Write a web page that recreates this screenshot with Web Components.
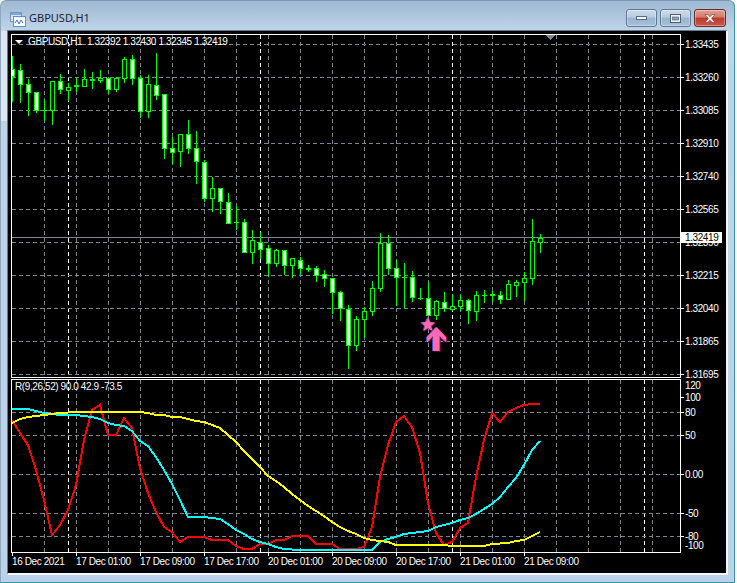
<!DOCTYPE html>
<html>
<head>
<meta charset="utf-8">
<title>GBPUSD,H1</title>
<style>
  html, body { margin: 0; background: #fff; }
</style>
</head>
<body>
<mt-window>
  <span slot="title">GBPUSD,H1</span>
  <mt-chart></mt-chart>
</mt-window>

<script>
const GRID = "#778899";

// vertical grid lines shared by both panes
function gridColumns(top, bottom) {
  let out = "";
  for (let x = 44; x < 680; x += 32) {
    out += `<line x1="${x + 0.5}" x2="${x + 0.5}" y1="${top}" y2="${bottom}" stroke="${GRID}" stroke-dasharray="4 3"/>`;
  }
  for (let x = 68; x < 680; x += 192) {
    out += `<line x1="${x + 0.5}" x2="${x + 0.5}" y1="${top}" y2="${bottom}" stroke="#fff" stroke-dasharray="4 3"/>`;
  }
  return out;
}

function gridRows(levels) {
  return levels.map(y =>
    `<line x1="12" x2="680" y1="${y + 0.5}" y2="${y + 0.5}" stroke="${GRID}" stroke-dasharray="4 3"/>`
  ).join("");
}

// wickTop, wickBottom, bodyTop, bodyBottom, kind (w = white, h = hollow)
const CANDLES = [
  [56,101,69,76,"w"],[64,102,70,84,"w"],[79,115,84,92,"w"],[92,112,92,110,"w"],
  [100,120,110,110,"d"],[81,124,81,110,"h"],[74,93,81,89,"w"],[83,100,87,90,"h"],
  [78,91,85,86,"d"],[69,86,79,86,"h"],[72,88,79,80,"d"],[70,82,78,80,"h"],
  [77,93,78,89,"w"],[77,91,78,89,"h"],[57,82,59,78,"h"],[55,84,59,78,"w"],
  [75,117,78,111,"w"],[75,117,84,111,"h"],[53,99,85,95,"w"],[94,158,94,148,"w"],
  [137,163,148,152,"w"],[134,166,134,151,"h"],[120,153,134,148,"w"],[131,183,148,161,"w"],
  [160,201,162,198,"w"],[177,211,188,198,"h"],[188,213,188,201,"w"],[193,223,202,223,"w"],
  [206,229,222,222,"d"],[219,252,222,252,"w"],[230,263,240,252,"h"],[232,258,242,249,"w"],
  [245,276,248,263,"w"],[249,266,250,263,"h"],[250,274,250,265,"w"],[258,277,258,265,"h"],
  [257,274,260,268,"w"],[265,271,268,269,"d"],[266,281,268,275,"w"],[270,286,274,278,"w"],
  [278,313,278,292,"w"],[291,320,292,308,"w"],[305,368,309,345,"w"],[316,350,319,345,"h"],
  [307,337,311,319,"h"],[281,315,288,311,"h"],[233,291,243,288,"h"],[235,274,243,268,"w"],
  [260,305,268,277,"w"],[263,307,277,277,"d"],[271,301,277,297,"w"],[288,299,298,298,"d"],
  [282,315,298,315,"w"],[300,319,301,315,"h"],[292,311,302,308,"w"],[294,310,306,309,"h"],
  [295,310,300,306,"h"],[299,323,300,310,"w"],[291,320,295,311,"h"],[290,302,295,295,"d"],
  [291,301,294,295,"d"],[291,303,295,299,"w"],[280,299,284,299,"h"],[280,296,282,285,"h"],
  [272,300,278,282,"h"],[219,284,241,278,"h"],[234,252,238,242,"h"]
];

const RED = "12,420 20,433 28,445 36,470 44,500 52,535 60,525 68,510 76,485 84,440 92,410 100,405 108,435 116,435 124,418 132,428 140,468 148,493 156,512 164,527 172,532 180,542 188,537 196,537 204,537 212,540 220,540 228,540 236,546 244,549 252,549 260,544 268,544 276,540 284,540 292,536 300,536 308,536 316,544 324,544 332,544 340,549 348,549 356,549 364,547 372,527 380,477 388,445 396,422 404,416 412,427 420,453 428,503 436,533 444,545 452,542 460,528 468,523 476,477 484,440 492,413 500,422 508,412 516,408 524,405 532,404 540,404";
const CYAN = "12,409 28,409 36,411 44,413 52,414 60,415 76,415 84,416 92,417 100,419 108,423 116,425 124,426 132,431 140,441 148,446 156,457 164,470 172,484 180,500 188,517 204,517 212,518 220,519 228,524 236,530 244,534 252,539 260,542 268,544 276,547 284,549 300,550 372,550 380,542 388,539 396,537 404,534 412,533 420,532 428,531 436,527 444,525 452,523 460,520 468,518 476,514 484,509 492,504 500,497 508,487 516,478 524,465 532,450 540,441";
const YELLOW = "12,423 20,419 28,417 36,416 44,415 52,414 60,413 76,412 140,412 148,413 156,415 164,415 172,417 180,417 188,419 196,421 204,422 212,425 220,428 228,435 236,442 244,451 260,467 268,476 276,481 284,487 292,494 300,500 308,506 316,511 324,516 332,522 340,527 348,531 356,534 364,538 372,540 380,541 388,542 396,545 444,545 452,546 484,546 492,544 508,543 516,541 524,540 532,536 540,532";

const CHART_FONT = `font: 10px "Liberation Sans", sans-serif; letter-spacing: -0.4px; color: #fff;`;

const paneTemplate = document.createElement("template");
paneTemplate.innerHTML = `
  <style>
    :host { display: block; position: relative; box-sizing: border-box; border: 1px solid #fff; ${CHART_FONT} }
    svg { display: block; }
    .legend { position: absolute; top: 1px; left: 3px; display: flex; align-items: center; gap: 5px; line-height: 12px; white-space: pre; }
  </style>
  <svg shape-rendering="crispEdges"></svg>
  <div class="legend"><slot></slot></div>
`;

class MtPricePane extends HTMLElement {
  constructor() {
    super();
    this.root = this.attachShadow({ mode: "open" });
    this.root.appendChild(paneTemplate.content.cloneNode(true));
  }

  connectedCallback() {
    const svg = this.root.querySelector("svg");
    svg.setAttribute("width", 668);
    svg.setAttribute("height", 342);
    svg.setAttribute("viewBox", "12 35 668 342");

    const rows = [];
    for (let y = 44; y < 377; y += 33) rows.push(y);

    let marks = "";
    CANDLES.forEach((c, i) => {
      const x = 12 + i * 8;
      const [wickTop, wickBottom, bodyTop, bodyBottom, kind] = c;
      marks += `<rect x="${x}" y="${wickTop}" width="1" height="${wickBottom - wickTop + 1}" fill="#0f0"/>`;
      marks += `<rect x="${x - 2}" y="${bodyTop}" width="5" height="${bodyBottom - bodyTop + 1}" fill="#0f0"/>`;
      if (kind !== "d") {
        marks += `<rect x="${x - 1}" y="${bodyTop + 1}" width="3" height="${bodyBottom - bodyTop - 1}" fill="${kind === "w" ? "#fff" : "#000"}"/>`;
      }
    });

    const arrow = "436.5,327 446,337 446,342 439.5,336 439.5,351 433,351 433,336 427,342.5 427,337";
    const star = "428,317 430,322 435,322.5 431,326 432.5,331 428,328 423.5,331 425,326 421,322.5 426,322";

    svg.innerHTML = gridColumns(35, 377) + gridRows(rows)
      + `<line x1="12" x2="680" y1="237.5" y2="237.5" stroke="${GRID}"/>`
      + marks
      + `<polygon points="546,35 555,35 550.5,40" fill="${GRID}"/>`
      + `<g shape-rendering="auto">
           <polygon points="${star}" fill="#4a4ac8" transform="translate(-1 0)"/>
           <polygon points="${star}" fill="#b01048" transform="translate(0.8 0.6)"/>
           <polygon points="${star}" fill="#ff69b4"/>
           <polygon points="${arrow}" fill="#4a4ac8" transform="translate(-1 0)"/>
           <polygon points="${arrow}" fill="#b01048" transform="translate(1 0.6)"/>
           <polygon points="${arrow}" fill="#ff69b4"/>
         </g>`;
  }
}

class MtIndicatorPane extends HTMLElement {
  constructor() {
    super();
    this.root = this.attachShadow({ mode: "open" });
    this.root.appendChild(paneTemplate.content.cloneNode(true));
  }

  connectedCallback() {
    const svg = this.root.querySelector("svg");
    svg.setAttribute("width", 668);
    svg.setAttribute("height", 172);
    svg.setAttribute("viewBox", "12 380 668 172");

    const line = (points, color) =>
      `<polyline points="${points}" fill="none" stroke="${color}" stroke-width="2"/>`;

    svg.innerHTML = gridColumns(380, 552) + gridRows([412, 435, 474, 513, 536])
      + line(RED, "#f00") + line(CYAN, "#0ff") + line(YELLOW, "#ff0");
  }
}

const axisTemplate = document.createElement("template");
axisTemplate.innerHTML = `
  <style>
    :host { display: flex; flex-direction: column; position: relative; width: 45px; ${CHART_FONT} }
    .row { display: flex; align-items: center; flex: none; white-space: nowrap; }
    .row i { flex: none; width: 3px; height: 1px; margin-right: 1px; background: #fff; }
    .row i.none { background: none; }
    .current { position: absolute; left: 0; top: 198px; width: 41px; height: 11px; box-sizing: border-box; padding-left: 4px; background: #fff; color: #000; line-height: 11px; }
  </style>
`;

// rows: [label, height, hasTick]
class MtAxis extends HTMLElement {
  constructor() {
    super();
    this.root = this.attachShadow({ mode: "open" });
    this.root.appendChild(axisTemplate.content.cloneNode(true));
  }

  set rows(rows) {
    rows.forEach(([label, height, tick]) => {
      const row = document.createElement("div");
      row.className = "row";
      row.style.height = height + "px";
      const mark = document.createElement("i");
      if (!tick) mark.className = "none";
      const text = document.createElement("span");
      text.textContent = label;
      row.append(mark, text);
      this.root.appendChild(row);
    });
  }

  set current(value) {
    const badge = document.createElement("div");
    badge.className = "current";
    badge.textContent = value;
    this.root.appendChild(badge);
  }
}

const timeTemplate = document.createElement("template");
timeTemplate.innerHTML = `
  <style>
    :host { display: flex; padding-left: 1px; ${CHART_FONT} }
    .cell { flex: none; width: 64px; white-space: nowrap; }
    .cell i { display: block; width: 1px; height: 3px; background: #fff; }
    .cell span { display: block; line-height: 12px; }
  </style>
`;

class MtTimeAxis extends HTMLElement {
  constructor() {
    super();
    this.root = this.attachShadow({ mode: "open" });
    this.root.appendChild(timeTemplate.content.cloneNode(true));
  }

  connectedCallback() {
    (this.getAttribute("labels") || "").split("|").forEach(label => {
      const cell = document.createElement("div");
      cell.className = "cell";
      const tick = document.createElement("i");
      const text = document.createElement("span");
      text.textContent = label;
      cell.append(tick, text);
      this.root.appendChild(cell);
    });
  }
}

const chartTemplate = document.createElement("template");
chartTemplate.innerHTML = `
  <style>
    :host { display: block; box-sizing: border-box; width: 721px; height: 545px; padding: 3px 0 0 3px; background: #000; background-clip: padding-box; border-style: solid; border-width: 1px 2px 2px 1px; border-color: #64798c #f4f6f8 #f4f6f8 #64798c; }
    .pane { display: flex; }
    .pane + .pane { margin-top: 1px; }
    mt-price-pane, mt-indicator-pane { flex: none; width: 670px; }
    .triangle { width: 0; height: 0; border: 4px solid transparent; border-top-color: #fff; border-bottom-width: 0; }
  </style>
  <div class="pane">
    <mt-price-pane>
      <span class="triangle"></span>
      <span>GBPUSD,H1  1.32392 1.32430 1.32345 1.32419</span>
    </mt-price-pane>
    <mt-axis id="prices"></mt-axis>
  </div>
  <div class="pane">
    <mt-indicator-pane><span>R(9,26,52) 90.0 42.9 -73.5</span></mt-indicator-pane>
    <mt-axis id="levels"></mt-axis>
  </div>
  <mt-time-axis labels="16 Dec 2021|17 Dec 01:00|17 Dec 09:00|17 Dec 17:00|20 Dec 01:00|20 Dec 09:00|20 Dec 17:00|21 Dec 01:00|21 Dec 09:00"></mt-time-axis>
`;

class MtChart extends HTMLElement {
  constructor() {
    super();
    this.root = this.attachShadow({ mode: "open" });
    this.root.appendChild(chartTemplate.content.cloneNode(true));
  }

  connectedCallback() {
    const prices = this.root.querySelector("#prices");
    prices.style.paddingTop = "5px";
    prices.style.gap = "22px";
    prices.style.height = "344px";
    prices.style.boxSizing = "border-box";
    prices.rows = ["1.33435","1.33260","1.33085","1.32910","1.32740","1.32565","1.32390","1.32215","1.32040","1.31865","1.31695"]
      .map(p => [p, 11, true]);
    prices.current = "1.32419";

    // row heights keep each label centred on its level
    this.root.querySelector("#levels").rows = [
      ["120", 13, false], ["100", 11, true], ["80", 19, true], ["50", 27, true],
      ["0.00", 50, true], ["-50", 28, true], ["-80", 18, true], ["-100", 0, false]
    ];
  }
}

const buttonTemplate = document.createElement("template");
buttonTemplate.innerHTML = `
  <style>
    :host { display: flex; align-items: center; justify-content: center; box-sizing: border-box; width: 31px; height: 18px; border: 1px solid #5f7a96; border-radius: 3px; background: linear-gradient(#cedcea 0, #b7cce1 45%, #98b4cf 50%, #a7c0d8 100%); box-shadow: inset 0 0 0 1px rgba(255,255,255,.35); }
    :host([kind="close"]) { width: 32px; border-color: #6e2a26; background: linear-gradient(#dfa196 0, #d27a6c 45%, #bb3a2c 50%, #c9584a 100%); }
    svg { display: block; }
  </style>
  <slot></slot>
`;

class MtButton extends HTMLElement {
  constructor() {
    super();
    this.root = this.attachShadow({ mode: "open" });
    this.root.appendChild(buttonTemplate.content.cloneNode(true));
  }
}

const windowTemplate = document.createElement("template");
windowTemplate.innerHTML = `
  <style>
    :host { display: flex; flex-direction: column; box-sizing: border-box; width: 735px; height: 583px; padding: 0 6px 6px 6px; border: 1px solid #3f93a8; border-top-color: #7d98b0; border-left-color: #8fa8bd; border-radius: 6px 6px 0 0;
      background: linear-gradient(#dbe6f2, #dbe6f2) 0 30px / 6px 90px no-repeat, linear-gradient(#9fb9d2 0, #bfd5ea 30px, #b9d1ea 100%); }
    .bar { display: flex; align-items: flex-start; flex: none; height: 29px; }
    .icon { flex: none; margin: 10px 3px 0 3px; }
    .title { flex: 1; font: 11px/13px "Noto Sans", sans-serif; color: #1c2333; margin-top: 10px; }
    .buttons { display: flex; gap: 3px; margin-top: 8px; margin-right: 2px; }
  </style>
  <div class="bar">
    <svg class="icon" width="16" height="16" viewBox="0 0 16 16" shape-rendering="crispEdges">
      <rect x="0.5" y="1.5" width="11" height="9" fill="#d7e6f6" stroke="#6f97c8"/>
      <rect x="1" y="2" width="10" height="2" fill="#7fa7d8"/>
      <rect x="3.5" y="5.5" width="12" height="10" fill="#fff" stroke="#5f8fcb"/>
      <path d="M5 12 L7 9 L9 13 L11 9 L13 12" fill="none" stroke="#3a74c0" shape-rendering="auto"/>
    </svg>
    <div class="title"><slot name="title"></slot></div>
    <div class="buttons">
      <mt-button>
        <svg width="11" height="4" viewBox="0 0 11 4"><rect x="0.5" y="0.5" width="10" height="3" fill="#f2f5f8" stroke="#5e6c7a"/></svg>
      </mt-button>
      <mt-button>
        <svg width="11" height="9" viewBox="0 0 11 9"><rect x="0.5" y="0.5" width="10" height="8" fill="#eef2f6" stroke="#4f5e6d"/><rect x="2.5" y="3" width="6" height="3" fill="#8fa3b8" stroke="#4f5e6d" stroke-width="0.6"/></svg>
      </mt-button>
      <mt-button kind="close">
        <svg width="12" height="9" viewBox="0 0 12 9"><path d="M1 0.5 L3.8 0.5 L6 2.8 L8.2 0.5 L11 0.5 L7.6 4.5 L11 8.5 L8.2 8.5 L6 6.2 L3.8 8.5 L1 8.5 L4.4 4.5 Z" fill="#f6f1ee" stroke="#7a3028" stroke-width="0.6"/></svg>
      </mt-button>
    </div>
  </div>
  <slot></slot>
`;

class MtWindow extends HTMLElement {
  constructor() {
    super();
    this.root = this.attachShadow({ mode: "open" });
    this.root.appendChild(windowTemplate.content.cloneNode(true));
  }
}

customElements.define("mt-button", MtButton);
customElements.define("mt-axis", MtAxis);
customElements.define("mt-time-axis", MtTimeAxis);
customElements.define("mt-price-pane", MtPricePane);
customElements.define("mt-indicator-pane", MtIndicatorPane);
customElements.define("mt-chart", MtChart);
customElements.define("mt-window", MtWindow);
</script>
</body>
</html>
